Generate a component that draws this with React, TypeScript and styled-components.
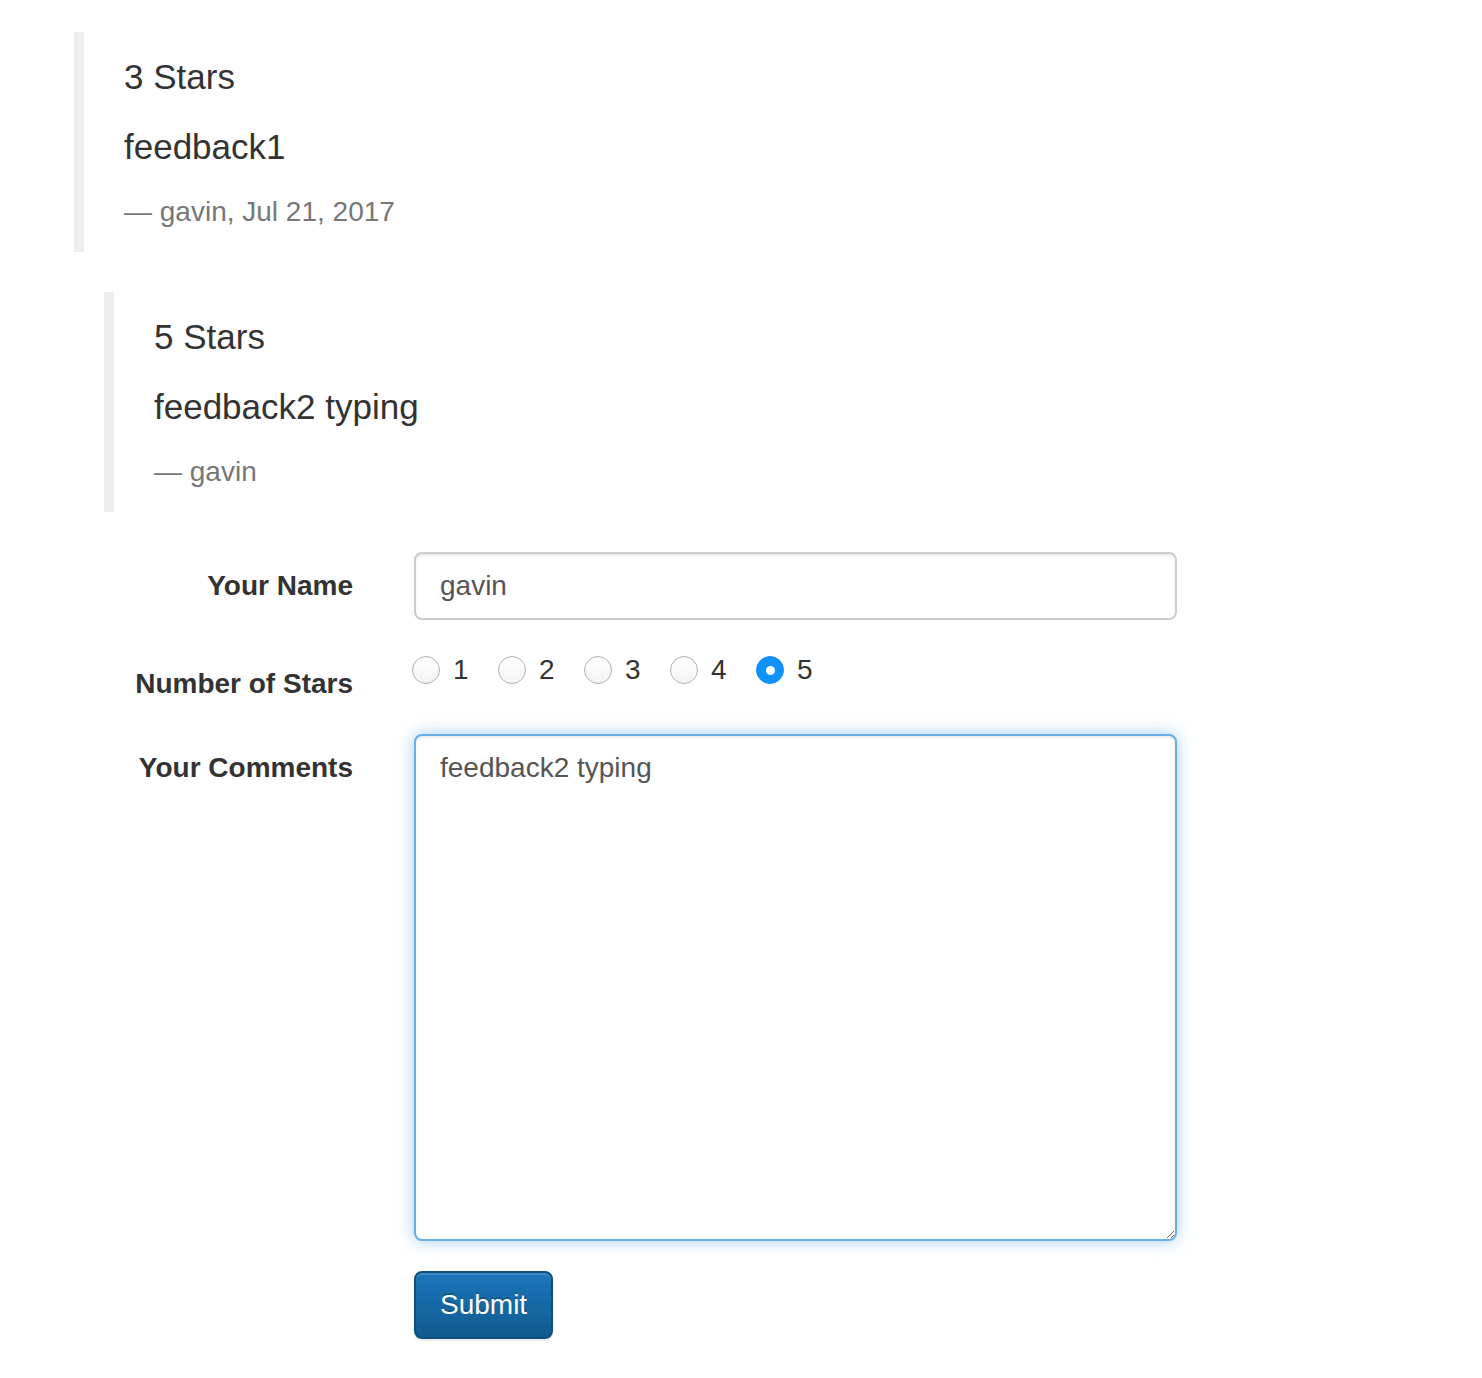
import React from 'react';
import styled, { createGlobalStyle } from 'styled-components';

const GlobalStyle = createGlobalStyle`
  * {
    box-sizing: border-box;
  }
  body {
    margin: 0;
    background: #fff;
    color: #333;
    font-family: "Liberation Sans", Arial, sans-serif;
    font-size: 28px;
    line-height: 40px;
  }
`;

const Page = styled.div`
  padding: 32px 0 40px 0;
`;

const Quote = styled.blockquote<{ indent: number }>`
  margin: 0 0 40px ${({ indent }) => indent}px;
  padding: 20px 40px;
  border-left: 10px solid #eee;
  font-size: 35px;
  line-height: 50px;
`;

const QuoteLine = styled.p`
  margin: 0 0 20px 0;
`;

const QuoteFooter = styled.footer`
  display: block;
  font-size: 28px;
  line-height: 40px;
  color: #777;
  &:before {
    content: '\\2014 \\00A0';
  }
`;

const Form = styled.form`
  margin-top: 40px;
`;

const FormGroup = styled.div`
  display: grid;
  grid-template-columns: 353px 763px;
  column-gap: 61px;
  align-items: start;
  margin-bottom: 30px;
`;

const Label = styled.label`
  padding-top: 14px;
  text-align: right;
  font-weight: bold;
  font-size: 28px;
  line-height: 40px;
  color: #333;
`;

const TextInput = styled.input`
  display: block;
  width: 100%;
  height: 68px;
  padding: 12px 24px;
  font: inherit;
  font-size: 28px;
  line-height: 40px;
  color: #555;
  background: #fff;
  border: 2px solid #ccc;
  border-radius: 8px;
  box-shadow: inset 0 2px 2px rgba(0, 0, 0, 0.075);
  outline: none;
`;

const TextArea = styled.textarea`
  display: block;
  width: 100%;
  height: 507px;
  padding: 12px 24px;
  font: inherit;
  font-size: 28px;
  line-height: 40px;
  color: #555;
  background: #fff;
  border: 2px solid #66afe9;
  border-radius: 8px;
  box-shadow: inset 0 2px 2px rgba(0, 0, 0, 0.075), 0 0 16px rgba(102, 175, 233, 0.6);
  outline: none;
  resize: vertical;
`;

const RadioRow = styled.div`
  display: flex;
  align-items: center;
  gap: 30px;
  margin-left: -2px;
`;

const RadioOption = styled.label`
  display: flex;
  align-items: center;
  gap: 13px;
  font-size: 28px;
  line-height: 40px;
  color: #333;
  cursor: pointer;
`;

const RadioCircle = styled.input`
  appearance: none;
  margin: 0;
  width: 28px;
  height: 28px;
  border-radius: 50%;
  border: 1.5px solid #b3b3b3;
  background: linear-gradient(to bottom, #fff 0%, #f4f4f4 100%);
  box-shadow: inset 0 1px 1px rgba(0, 0, 0, 0.04);
  display: grid;
  place-items: center;
  cursor: pointer;
  &:checked {
    border-color: #1a8cff;
    background: #0d93ff;
  }
  &:checked::after {
    content: '';
    width: 9px;
    height: 9px;
    border-radius: 50%;
    background: #fff;
  }
`;

const DigitText = styled.span`
  display: inline-block;
  width: 15px;
`;

const SubmitButton = styled.button`
  grid-column: 2;
  justify-self: start;
  padding: 12px 24px;
  font: inherit;
  font-size: 28px;
  line-height: 40px;
  color: #fff;
  text-shadow: 0 -2px 0 rgba(0, 0, 0, 0.2);
  background: linear-gradient(to bottom, #1d76ba 0%, #0f5a8f 100%);
  border: 2px solid #0d4f7f;
  border-radius: 8px;
  box-shadow: inset 0 2px 0 rgba(255, 255, 255, 0.15), 0 2px 2px rgba(0, 0, 0, 0.075);
  cursor: pointer;
`;

const feedbacks = [
  { stars: 3, text: 'feedback1', by: 'gavin, Jul 21, 2017', indent: 74 },
  { stars: 5, text: 'feedback2 typing', by: 'gavin', indent: 104 },
];

const App = () => {
  const [stars, setStars] = React.useState(5);
  return (
    <Page>
      <GlobalStyle />
      {feedbacks.map((f) => (
        <Quote key={f.text} indent={f.indent}>
          <QuoteLine>{f.stars} Stars</QuoteLine>
          <QuoteLine>{f.text}</QuoteLine>
          <QuoteFooter>{f.by}</QuoteFooter>
        </Quote>
      ))}
      <Form onSubmit={(e) => e.preventDefault()}>
        <FormGroup>
          <Label htmlFor="name">Your Name</Label>
          <TextInput id="name" type="text" defaultValue="gavin" />
        </FormGroup>
        <FormGroup>
          <Label>Number of Stars</Label>
          <RadioRow>
            {[1, 2, 3, 4, 5].map((n) => (
              <RadioOption key={n}>
                <RadioCircle
                  type="radio"
                  name="stars"
                  value={n}
                  checked={stars === n}
                  onChange={() => setStars(n)}
                />
                <DigitText>{n}</DigitText>
              </RadioOption>
            ))}
          </RadioRow>
        </FormGroup>
        <FormGroup>
          <Label htmlFor="comments">Your Comments</Label>
          <TextArea id="comments" defaultValue="feedback2 typing" />
        </FormGroup>
        <FormGroup>
          <SubmitButton type="submit">Submit</SubmitButton>
        </FormGroup>
      </Form>
    </Page>
  );
};

export default App;
